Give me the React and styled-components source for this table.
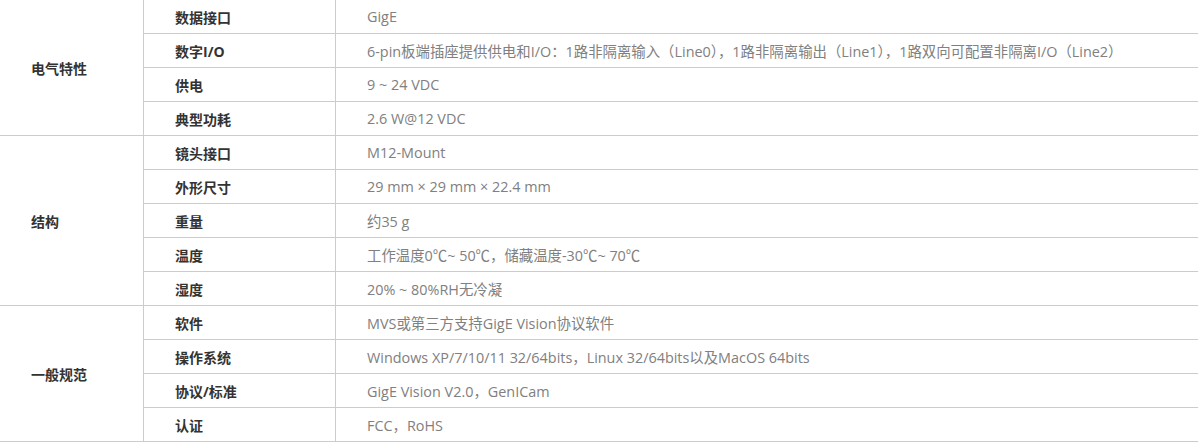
import React from 'react'
import styled, { createGlobalStyle } from 'styled-components'

const GlobalStyle = createGlobalStyle`
  html, body {
    margin: 0;
    padding: 0;
    background: #fff;
  }
  body {
    font-family: "Open Sans", "Noto Sans CJK SC", sans-serif;
    font-size: 14px;
  }
`

const Table = styled.div`
  width: 100%;
  display: flex;
  flex-direction: column;
`

const Group = styled.div`
  display: flex;
  border-bottom: 1px solid #cccccc;
`

const GroupName = styled.div`
  box-sizing: border-box;
  width: 144px;
  flex-shrink: 0;
  padding-left: 31px;
  display: flex;
  align-items: center;
  border-right: 1px solid #cccccc;
  color: #333;
  font-weight: bold;
`

const Rows = styled.div`
  flex: 1;
  display: flex;
  flex-direction: column;
`

const Row = styled.div`
  display: flex;
  height: 33px;
  & + & {
    border-top: 1px solid #cccccc;
  }
`

const Label = styled.div`
  box-sizing: border-box;
  width: 192px;
  flex-shrink: 0;
  padding-left: 31px;
  display: flex;
  align-items: center;
  border-right: 1px solid #cccccc;
  color: #333;
  font-weight: bold;
`

const Value = styled.div`
  flex: 1;
  padding-left: 31px;
  display: flex;
  align-items: center;
  color: #808080;
  font-size: 14.4px;
  white-space: nowrap;
`

const specs = [
  {
    name: '电气特性',
    rows: [
      ['数据接口', 'GigE'],
      ['数字I/O', '6-pin板端插座提供供电和I/O：1路非隔离输入（Line0），1路非隔离输出（Line1），1路双向可配置非隔离I/O（Line2）'],
      ['供电', '9 ~ 24 VDC'],
      ['典型功耗', '2.6 W@12 VDC'],
    ],
  },
  {
    name: '结构',
    rows: [
      ['镜头接口', 'M12-Mount'],
      ['外形尺寸', '29 mm × 29 mm × 22.4 mm'],
      ['重量', '约35 g'],
      ['温度', '工作温度0℃~ 50℃，储藏温度-30℃~ 70℃'],
      ['湿度', '20% ~ 80%RH无冷凝'],
    ],
  },
  {
    name: '一般规范',
    rows: [
      ['软件', 'MVS或第三方支持GigE Vision协议软件'],
      ['操作系统', 'Windows XP/7/10/11 32/64bits，Linux 32/64bits以及MacOS 64bits'],
      ['协议/标准', 'GigE Vision V2.0，GenICam'],
      ['认证', 'FCC，RoHS'],
    ],
  },
]

export default function App() {
  return (
    <>
      <GlobalStyle />
      <Table>
        {specs.map((g) => (
          <Group key={g.name}>
            <GroupName>{g.name}</GroupName>
            <Rows>
              {g.rows.map(([label, value]) => (
                <Row key={label}>
                  <Label>{label}</Label>
                  <Value>{value}</Value>
                </Row>
              ))}
            </Rows>
          </Group>
        ))}
      </Table>
    </>
  )
}
